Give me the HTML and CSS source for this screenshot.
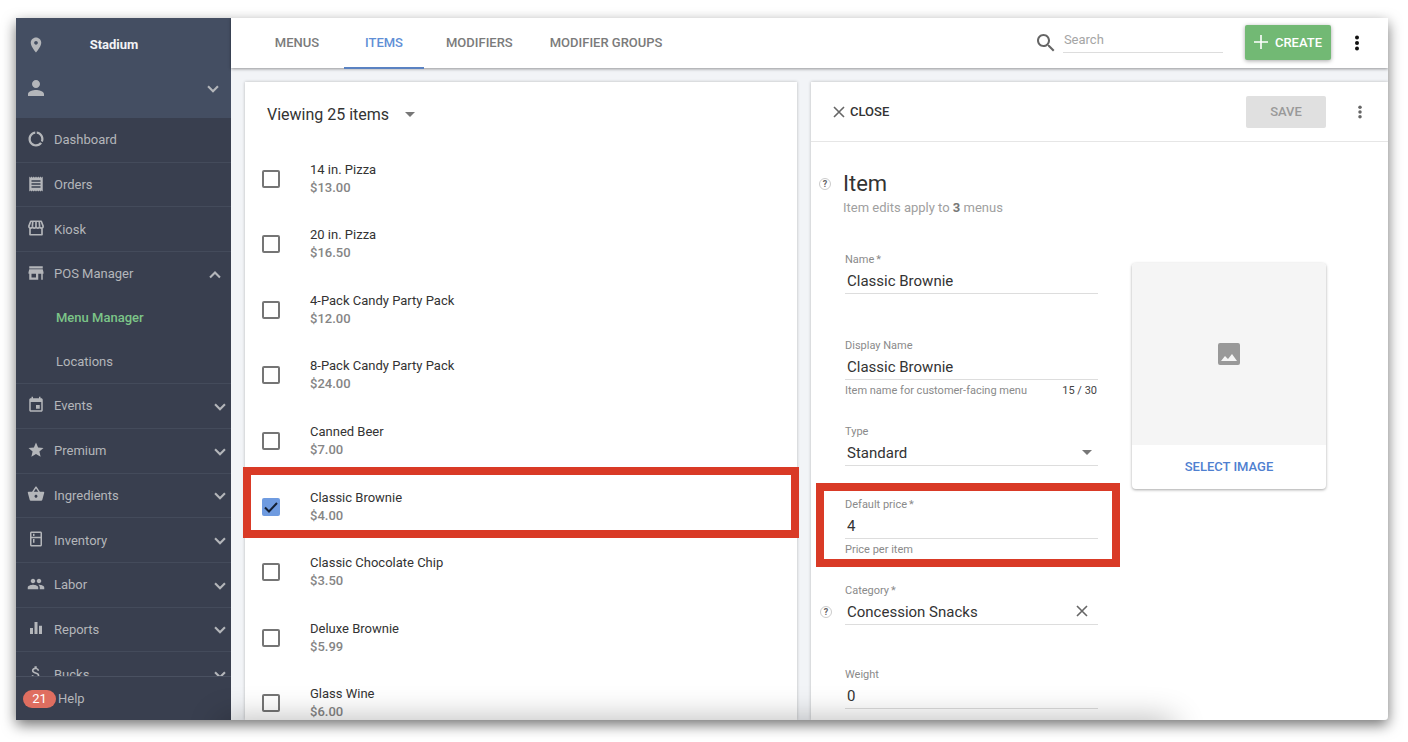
FILE: index.html
```html
<!DOCTYPE html>
<html lang="en">
<head>
    <meta charset="UTF-8">
    <meta name="viewport" content="width=device-width, initial-scale=1.0">
    <title>Menu Manager</title>
    <link rel="stylesheet" href="styles.css">
</head>
<body>
    <!-- shared icons -->
    <svg class="sprite" aria-hidden="true">
        <symbol id="down" viewBox="0 0 24 24"><path d="M3.500 9l8.500 8.500L20.500 9" fill="none" stroke="currentColor" stroke-width="3.600"/></symbol>
        <symbol id="up" viewBox="0 0 24 24"><path d="M3.500 18L12 9.500l8.500 8.500" fill="none" stroke="currentColor" stroke-width="3.600"/></symbol>
        <symbol id="caret" viewBox="0 0 10 5"><path d="M0 0h10L5 5z"/></symbol>
        <symbol id="cross" viewBox="0 0 12 12"><path d="M1 1l10 10M11 1L1 11" fill="none" stroke="currentColor" stroke-width="1.600"/></symbol>
        <symbol id="dots" viewBox="0 0 4 16"><circle cx="2" cy="2.500" r="2"/><circle cx="2" cy="8" r="2"/><circle cx="2" cy="13.500" r="2"/></symbol>
    </svg>

    <div class="app">
        <aside class="sidebar">
            <div class="account">
                <div class="account-row">
                    <svg class="icon" viewBox="0 0 24 24"><path d="M12 2C8.13 2 5 5.13 5 9c0 5.25 7 13 7 13s7-7.75 7-13c0-3.87-3.13-7-7-7zm0 9.5c-1.38 0-2.5-1.12-2.5-2.5s1.12-2.5 2.5-2.5 2.5 1.12 2.5 2.5-1.12 2.5-2.5 2.5z"/></svg>
                    <strong class="venue">Stadium</strong>
                </div>
                <button class="account-row" aria-label="Account">
                    <svg class="icon person" viewBox="4 4 16 16"><path d="M12 12c2.21 0 4-1.79 4-4s-1.79-4-4-4-4 1.79-4 4 1.79 4 4 4zm0 2c-2.67 0-8 1.34-8 4v2h16v-2c0-2.66-5.33-4-8-4z"/></svg>
                    <svg class="chevron inner"><use href="#down"/></svg>
                </button>
            </div>
            <nav class="nav">
                <ul class="nav-list">
                    <li class="nav-item"><a class="nav-link" href="#">
                        <svg class="icon" viewBox="0 0 24 24"><path d="M13 2.05v3.03c3.39.49 6 3.39 6 6.92 0 .9-.18 1.75-.48 2.54l2.6 1.53c.56-1.24.88-2.62.88-4.07 0-5.18-3.95-9.45-9-9.95zM12 19c-3.87 0-7-3.13-7-7 0-3.53 2.61-6.43 6-6.92V2.05c-5.06.5-9 4.76-9 9.95 0 5.52 4.47 10 9.99 10 3.31 0 6.24-1.61 8.06-4.09l-2.6-1.53C16.17 17.98 14.21 19 12 19z"/></svg>
                        Dashboard</a></li>
                    <li class="nav-item"><a class="nav-link" href="#">
                        <svg class="icon" viewBox="0 0 24 24"><path d="M18 17H6v-2h12v2zm0-4H6v-2h12v2zm0-4H6V7h12v2zM3 22l1.5-1.5L6 22l1.5-1.5L9 22l1.5-1.5L12 22l1.5-1.5L15 22l1.5-1.5L18 22l1.5-1.5L21 22V2l-1.5 1.5L18 2l-1.5 1.5L15 2l-1.5 1.5L12 2l-1.5 1.5L9 2 7.5 3.5 6 2 4.5 3.5 3 2v20z"/></svg>
                        Orders</a></li>
                    <li class="nav-item"><a class="nav-link" href="#">
                        <svg class="icon" viewBox="0 0 24 24"><path d="M5 3h14l2.5 6.5c0 3.5-4.700 3.500-4.700 0 0 3.500-4.800 3.500-4.800 0 0 3.500-4.800 3.500-4.800 0 0 3.500-4.700 3.500-4.700 0zM7.700 3.500l-.5 6M12 3v6.500M16.300 3.500l.5 6M4 12v9h16v-9" fill="none" stroke="currentColor" stroke-width="2.200" stroke-linejoin="round"/></svg>
                        Kiosk</a></li>
                    <li class="nav-item open">
                        <a class="nav-link" href="#">
                            <svg class="icon" viewBox="0 0 24 24"><path d="M21 3H3v3h18V3zm1 10v-2l-1-4H3l-1 4v2h1v8h12v-8h4v8h2v-8h1zm-10 5H6v-5h6v5z"/></svg>
                            POS Manager
                            <svg class="chevron inner"><use href="#up"/></svg></a>
                        <a class="nav-link sub active" href="#">Menu Manager</a>
                        <a class="nav-link sub" href="#">Locations</a>
                    </li>
                    <li class="nav-item"><a class="nav-link" href="#">
                        <svg class="icon" viewBox="0 0 24 24"><path d="M17 12h-5v5h5v-5zM16 1v2H8V1H6v2H5c-1.110 0-1.990.9-1.990 2L3 19c0 1.100.89 2 2 2h14c1.100 0 2-.9 2-2V5c0-1.100-.9-2-2-2h-1V1h-2zm3 18H5V8h14v11z"/></svg>
                        Events<svg class="chevron"><use href="#down"/></svg></a></li>
                    <li class="nav-item"><a class="nav-link" href="#">
                        <svg class="icon" viewBox="0 0 24 24"><path d="M12 17.270L18.180 21l-1.640-7.030L22 9.240l-7.190-.61L12 2 9.190 8.630 2 9.240l5.460 4.730L5.820 21z"/></svg>
                        Premium<svg class="chevron"><use href="#down"/></svg></a></li>
                    <li class="nav-item"><a class="nav-link" href="#">
                        <svg class="icon" viewBox="0 0 24 24"><path d="M17.210 9l-4.380-6.560c-.19-.28-.51-.42-.83-.42-.32 0-.64.14-.83.43L6.790 9H2c-.55 0-1 .45-1 1 0 .09.01.18.04.27l2.540 9.270c.23.84 1 1.460 1.920 1.460h13c.92 0 1.690-.62 1.930-1.460l2.540-9.270L23 10c0-.55-.45-1-1-1h-4.790zM9 9l3-4.400L15 9H9zm3 8c-1.100 0-2-.9-2-2s.9-2 2-2 2 .9 2 2-.9 2-2 2z"/></svg>
                        Ingredients<svg class="chevron"><use href="#down"/></svg></a></li>
                    <li class="nav-item"><a class="nav-link" href="#">
                        <svg class="icon" viewBox="0 0 24 24"><path d="M18 2.010L6 2c-1.100 0-2 .89-2 2v16c0 1.100.9 2 2 2h12c1.100 0 2-.9 2-2V4c0-1.100-.9-1.990-2-1.990zM18 20H6v-9.020h12V20zm0-11H6V4h12v5zM8 5h2v3H8zm0 7h2v5H8z"/></svg>
                        Inventory<svg class="chevron"><use href="#down"/></svg></a></li>
                    <li class="nav-item"><a class="nav-link" href="#">
                        <svg class="icon" viewBox="0 0 24 24"><path d="M16 11c1.660 0 2.990-1.340 2.990-3S17.660 5 16 5c-1.660 0-3 1.340-3 3s1.340 3 3 3zm-8 0c1.660 0 2.990-1.340 2.990-3S9.660 5 8 5C6.340 5 5 6.340 5 8s1.340 3 3 3zm0 2c-2.330 0-7 1.170-7 3.500V19h14v-2.500c0-2.330-4.670-3.500-7-3.500zm8 0c-.29 0-.62.02-.97.05 1.160.84 1.970 1.970 1.970 3.450V19h6v-2.500c0-2.330-4.670-3.500-7-3.500z"/></svg>
                        Labor<svg class="chevron"><use href="#down"/></svg></a></li>
                    <li class="nav-item"><a class="nav-link" href="#">
                        <svg class="icon" viewBox="0 0 24 24"><path d="M4 12h4v8H4zM10 4h4v16h-4zM16 9h4v11h-4z"/></svg>
                        Reports<svg class="chevron"><use href="#down"/></svg></a></li>
                    <li class="nav-item"><a class="nav-link" href="#">
                        <svg class="icon" viewBox="0 0 24 24"><path d="M11.800 10.900c-2.270-.59-3-1.200-3-2.150 0-1.090 1.010-1.850 2.700-1.850 1.780 0 2.440.85 2.500 2.100h2.210c-.07-1.720-1.120-3.300-3.210-3.810V3h-3v2.160c-1.940.42-3.500 1.680-3.500 3.610 0 2.310 1.910 3.460 4.700 4.130 2.500.6 3 1.480 3 2.410 0 .69-.49 1.790-2.700 1.790-2.060 0-2.870-.92-2.980-2.100h-2.200c.12 2.190 1.760 3.420 3.680 3.830V21h3v-2.150c1.950-.37 3.500-1.500 3.500-3.550 0-2.840-2.430-3.810-4.700-4.400z"/></svg>
                        Bucks<svg class="chevron"><use href="#down"/></svg></a></li>
                </ul>
            </nav>
            <a class="help" href="#"><span class="badge">21</span>Help</a>
        </aside>

        <main class="main">
            <header class="topbar">
                <nav class="tabs">
                    <a class="tab" href="#">MENUS</a>
                    <a class="tab current" href="#">ITEMS</a>
                    <a class="tab" href="#">MODIFIERS</a>
                    <a class="tab" href="#">MODIFIER GROUPS</a>
                </nav>
                <label class="search">
                    <svg class="search-icon" viewBox="3 3 18 18" role="img" aria-label="Search"><path d="M15.500 14h-.79l-.28-.27C15.410 12.590 16 11.110 16 9.500 16 5.910 13.090 3 9.500 3S3 5.910 3 9.500 5.910 16 9.500 16c1.610 0 3.090-.59 4.230-1.570l.27.28v.79l5 4.990L20.490 19l-4.990-5zm-6 0C7.010 14 5 11.990 5 9.500S7.010 5 9.500 5 14 7.010 14 9.500 11.990 14 9.500 14z"/></svg>
                    <input class="search-input" type="text" placeholder="Search">
                </label>
                <button class="create">
                    <svg class="plus" viewBox="0 0 14 14"><path d="M7 0v14M0 7h14" stroke="currentColor" stroke-width="1.600"/></svg>
                    CREATE
                </button>
                <button class="more" aria-label="More"><svg class="dots"><use href="#dots"/></svg></button>
            </header>

            <div class="content">
                <section class="panel list">
                    <button class="list-title">Viewing 25 items <svg class="caret"><use href="#caret"/></svg></button>
                    <ul class="items">
                        <li class="item"><input class="check" type="checkbox" id="i1"><label for="i1">14 in. Pizza<span class="price">$13.00</span></label></li>
                        <li class="item"><input class="check" type="checkbox" id="i2"><label for="i2">20 in. Pizza<span class="price">$16.50</span></label></li>
                        <li class="item"><input class="check" type="checkbox" id="i3"><label for="i3">4-Pack Candy Party Pack<span class="price">$12.00</span></label></li>
                        <li class="item"><input class="check" type="checkbox" id="i4"><label for="i4">8-Pack Candy Party Pack<span class="price">$24.00</span></label></li>
                        <li class="item"><input class="check" type="checkbox" id="i5"><label for="i5">Canned Beer<span class="price">$7.00</span></label></li>
                        <li class="item marked"><input class="check" type="checkbox" id="i6" checked><label for="i6">Classic Brownie<span class="price">$4.00</span></label></li>
                        <li class="item"><input class="check" type="checkbox" id="i7"><label for="i7">Classic Chocolate Chip<span class="price">$3.50</span></label></li>
                        <li class="item"><input class="check" type="checkbox" id="i8"><label for="i8">Deluxe Brownie<span class="price">$5.99</span></label></li>
                        <li class="item"><input class="check" type="checkbox" id="i9"><label for="i9">Glass Wine<span class="price">$6.00</span></label></li>
                    </ul>
                </section>

                <section class="panel detail">
                    <div class="detail-bar">
                        <button class="close"><svg class="cross"><use href="#cross"/></svg>CLOSE</button>
                        <button class="save" disabled>SAVE</button>
                        <button class="more" aria-label="Item options"><svg class="dots small"><use href="#dots"/></svg></button>
                    </div>
                    <div class="heading">
                        <span class="hint-icon">?</span>
                        <h1 class="title">Item</h1>
                    </div>
                    <p class="subtitle">Item edits apply to <b>3</b> menus</p>
                    <div class="form">
                        <div class="fields">
                            <div class="field">
                                <label class="label" for="name">Name<span class="star">*</span></label>
                                <input class="value" type="text" id="name" value="Classic Brownie">
                            </div>
                            <div class="field">
                                <label class="label" for="display">Display Name</label>
                                <input class="value" type="text" id="display" value="Classic Brownie">
                                <div class="note"><span>Item name for customer-facing menu</span><span class="count">15 / 30</span></div>
                            </div>
                            <div class="field short">
                                <label class="label" for="type">Type</label>
                                <div class="control">
                                    <select class="value" id="type"><option>Standard</option></select>
                                    <svg class="caret"><use href="#caret"/></svg>
                                </div>
                            </div>
                            <div class="field marked">
                                <label class="label" for="price">Default price<span class="star">*</span></label>
                                <input class="value" type="text" id="price" value="4">
                                <div class="note">Price per item</div>
                            </div>
                            <div class="field">
                                <label class="label" for="category">Category<span class="star">*</span></label>
                                <div class="control">
                                    <span class="hint-icon side">?</span>
                                    <input class="value" type="text" id="category" value="Concession Snacks">
                                    <button class="clear" aria-label="Clear category"><svg class="cross"><use href="#cross"/></svg></button>
                                </div>
                            </div>
                            <div class="field">
                                <label class="label" for="weight">Weight</label>
                                <input class="value" type="text" id="weight" value="0">
                            </div>
                        </div>
                        <div class="photo">
                            <div class="photo-empty">
                                <svg class="photo-icon" viewBox="0 0 22 22"><path fill-rule="evenodd" d="M2 0h18a2 2 0 0 1 2 2v18a2 2 0 0 1-2 2H2a2 2 0 0 1-2-2V2a2 2 0 0 1 2-2zM3 18h16l-5-7-4 5-3-3z"/></svg>
                            </div>
                            <button class="select-image">SELECT IMAGE</button>
                        </div>
                    </div>
                </section>
            </div>
        </main>
    </div>
</body>
</html>
```
FILE: styles.css
```css
* {
    margin: 0;
    padding: 0;
    box-sizing: border-box;
}

body {
    font-family: Roboto, sans-serif;
    font-size: 13px;
    height: 100vh;
    padding: 18px 20px 22px 16px;
    background-color: white;
    color: #333;
    display: flex;
    overflow: hidden;
}

ul {
    list-style: none;
}

a {
    color: inherit;
    text-decoration: none;
}

button,
input,
select {
    font: inherit;
    color: inherit;
    background: none;
    border: none;
    outline: none;
}

button {
    cursor: pointer;
}

svg {
    fill: currentColor;
    flex: none;
}

.sprite {
    display: none;
}

.app {
    flex: 1;
    display: flex;
    position: relative;
    overflow: hidden;
    border-radius: 0 0 4px 0;
    box-shadow: 0 5px 14px rgba(0, 0, 0, 0.55);
}

/* soft shade along the bottom edge */
.app::after {
    content: "";
    position: absolute;
    left: 205px;
    right: 215px;
    bottom: -30px;
    height: 30px;
    box-shadow: 0 0 32px rgba(0, 0, 0, 0.3);
    pointer-events: none;
}

/* sidebar */
.sidebar {
    width: 215px;
    flex: none;
    display: flex;
    flex-direction: column;
    background-color: #393f4f;
    color: #b4b6ba;
}

.account {
    height: 100px;
    padding-top: 5px;
    background-color: #444e62;
}

.account-row {
    display: flex;
    align-items: center;
    width: 100%;
    height: 43px;
    padding: 0 11px;
}

.icon {
    width: 18px;
    height: 18px;
}

.nav .icon {
    margin-bottom: 2px;
}

.person {
    width: 16px;
    height: 16px;
    margin-left: 1px;
}

.venue {
    flex: 1;
    padding-right: 37px;
    text-align: center;
    font-weight: 700;
    color: #f2f3f5;
}

.nav {
    flex: 1;
    min-height: 0;
    overflow: hidden;
}

.nav-list {
    height: 579px;
    display: flex;
    flex-direction: column;
}

.nav-item {
    flex: 1;
    display: flex;
    flex-direction: column;
    border-bottom: 1px solid #444b5b;
}

.open {
    flex: 3;
}

.nav-link {
    flex: 1;
    display: flex;
    align-items: center;
    gap: 9px;
    padding: 0 4px 0 11px;
}

.sub {
    padding-left: 40px;
}

.active {
    color: #7cc588;
    font-weight: 500;
}

.chevron {
    width: 14px;
    height: 14px;
    margin-left: auto;
}

.inner {
    margin-right: 5px;
}

.account-row .inner {
    margin-right: 0;
}

.help {
    height: 44px;
    flex: none;
    display: flex;
    align-items: center;
    gap: 2px;
    padding-left: 7px;
    border-top: 1px solid #4a5161;
}

.badge {
    width: 33px;
    line-height: 18px;
    border-radius: 9px;
    text-align: center;
    background-color: #df6e60;
    color: white;
}

/* top bar */
.main {
    flex: 1;
    min-width: 0;
    display: flex;
    flex-direction: column;
    background-color: #f2f4f7;
}

.topbar {
    height: 50px;
    flex: none;
    display: flex;
    align-items: center;
    padding: 0 19px 0 26px;
    background-color: white;
    box-shadow: 0 1px 3px rgba(0, 0, 0, 0.4);
    z-index: 1;
}

.tabs {
    flex: 1;
    display: flex;
    gap: 7px;
}

.tab {
    min-width: 80px;
    padding: 1px 15px 0;
    line-height: 48px;
    border-bottom: 2px solid transparent;
    text-align: center;
    font-weight: 500;
    color: #7b7b7b;
}

.current {
    color: #5f8fd6;
    border-color: #5a82c2;
}

.search {
    display: flex;
    align-items: center;
    gap: 8px;
    margin-right: 22px;
    color: #666;
}

.search-icon {
    width: 18px;
    height: 18px;
}

.search-input {
    width: 160px;
    height: 26px;
    margin-bottom: 6px;
    padding-left: 1px;
    border-bottom: 1px solid #ddd;
}

.search-input::placeholder {
    color: #a5a5a5;
}

.create {
    display: flex;
    align-items: center;
    gap: 7px;
    height: 35px;
    margin-bottom: 2px;
    padding: 0 9px;
    border-radius: 2px;
    background-color: #72b974;
    color: white;
    font-weight: 500;
    box-shadow: 0 1px 4px rgba(0, 0, 0, 0.35);
}

.plus {
    width: 14px;
    height: 14px;
}

.more {
    display: flex;
    justify-content: center;
    width: 24px;
    margin-left: 14px;
    color: #111;
}

.dots {
    width: 4px;
    height: 16px;
}

.small {
    height: 14px;
    color: #666;
}

/* panels */
.content {
    flex: 1;
    min-height: 0;
    display: flex;
    gap: 14px;
    padding: 14px 0 0 14px;
}

.panel {
    background-color: white;
    box-shadow: 0 0 3px rgba(0, 0, 0, 0.25);
}

.list {
    flex: 552;
}

.list-title {
    display: flex;
    align-items: center;
    gap: 16px;
    height: 64px;
    padding-left: 22px;
    font-size: 16px;
}

.caret {
    width: 10px;
    height: 5px;
    color: #777;
}

.items {
    height: 590px;
    display: flex;
    flex-direction: column;
}

.item {
    flex: 1;
    display: flex;
    align-items: center;
    gap: 30px;
    padding-left: 17px;
    line-height: 18px;
}

.check {
    appearance: none;
    width: 18px;
    height: 18px;
    border: 2px solid #757575;
    border-radius: 2px;
}

.check:checked {
    border: none;
    background: #6f9be0 url("data:image/svg+xml,%3Csvg xmlns='http://www.w3.org/2000/svg' viewBox='0 0 18 18'%3E%3Cpath d='M3 9.500l4 4 8-8.500' fill='none' stroke='%23142033' stroke-width='2'/%3E%3C/svg%3E");
}

.price {
    display: block;
    font-weight: 500;
    color: #858585;
}

/* red callouts */
.marked {
    position: relative;
}

.marked::after {
    content: "";
    position: absolute;
    border: 8px solid #d93a26;
    pointer-events: none;
    z-index: 2;
}

.item.marked::after {
    inset: -7px -2px 1px;
}

.field.marked::after {
    inset: -14px -22px 16px -29px;
}

/* item detail */
.detail {
    flex: 577;
}

.detail-bar {
    display: flex;
    align-items: center;
    height: 60px;
    padding: 0 16px 0 22px;
    border-bottom: 1px solid #e6e6e6;
}

.close {
    display: flex;
    align-items: center;
    gap: 5px;
    margin-right: auto;
    font-weight: 500;
}

.cross {
    width: 12px;
    height: 12px;
    color: #666;
}

.save {
    width: 80px;
    height: 32px;
    border-radius: 2px;
    background-color: #e0e0e0;
    color: #999;
    font-weight: 500;
}

.detail-bar .more {
    margin-left: 22px;
}

.heading {
    display: flex;
    align-items: center;
    gap: 12px;
    padding: 28px 0 0 8px;
}

.hint-icon {
    width: 12px;
    height: 12px;
    border: 1px solid #ccc;
    border-radius: 50%;
    text-align: center;
    font-size: 9px;
    line-height: 10px;
    font-weight: 700;
    color: #666;
}

.title {
    font-size: 22px;
    line-height: 28px;
    font-weight: 400;
}

.subtitle {
    padding-left: 32px;
    line-height: 20px;
    color: #a0a0a0;
}

.subtitle b {
    color: #777;
}

.form {
    display: flex;
    align-items: flex-start;
    gap: 34px;
    padding: 34px 62px 0 34px;
}

.fields {
    flex: 1;
}

.field {
    height: 86px;
    font-size: 15px;
}

.short {
    height: 73px;
}

.field:nth-child(5) {
    height: 84px;
}

.label,
.note {
    display: flex;
    font-size: 11px;
    line-height: 16px;
    color: #8a8a8a;
}

.star {
    padding-left: 2px;
}

.value {
    display: block;
    width: 100%;
    height: 26px;
    padding-left: 2px;
    border-bottom: 1px solid #ddd;
    appearance: none;
}

.note {
    justify-content: space-between;
    padding: 3px 1px 0 0;
}

.count {
    color: #444;
}

.control {
    position: relative;
}

.control .caret {
    position: absolute;
    top: 10px;
    right: 6px;
    pointer-events: none;
}

.side {
    position: absolute;
    top: 7px;
    left: -25px;
}

.clear {
    position: absolute;
    top: 6px;
    right: 10px;
    display: flex;
}

.photo {
    width: 194px;
    margin-top: 11px;
    border-radius: 4px;
    overflow: hidden;
    box-shadow: 0 1px 3px rgba(0, 0, 0, 0.35);
}

.photo-empty {
    display: flex;
    align-items: center;
    justify-content: center;
    height: 182px;
    background-color: #f5f5f5;
}

.photo-icon {
    width: 22px;
    height: 22px;
    color: #999;
}

.select-image {
    width: 100%;
    height: 44px;
    padding-bottom: 2px;
    font-weight: 500;
    color: #4f80d0;
}
```
